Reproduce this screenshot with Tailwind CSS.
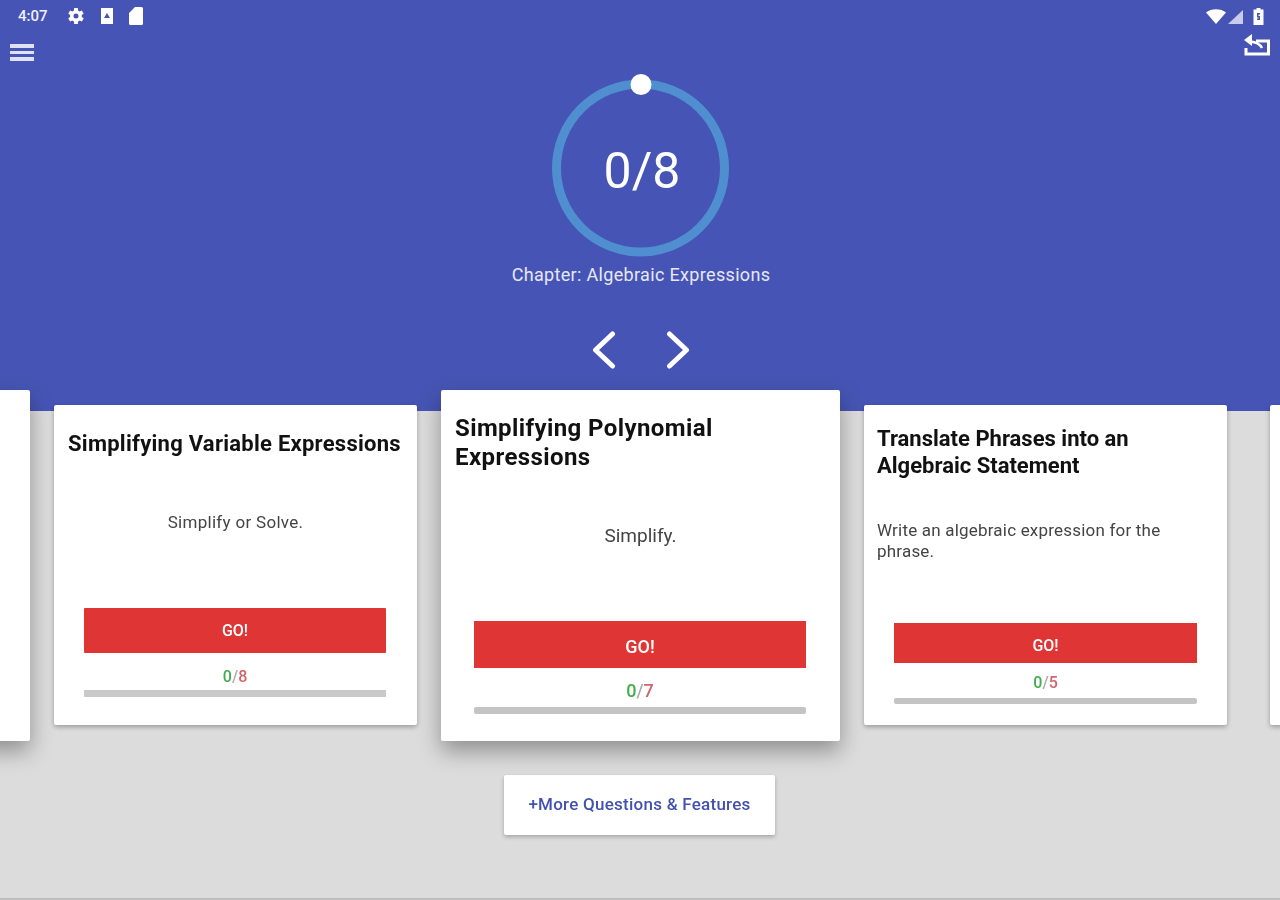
<!DOCTYPE html>
<html lang="en">
<head>
    <meta charset="UTF-8">
    <meta name="viewport" content="width=device-width, initial-scale=1.0">
    <title>Algebra Practice</title>
    <script src="https://cdn.jsdelivr.net/npm/@tailwindcss/browser@4"></script>
</head>
<body class="bg-[#dcdcdc] font-['Roboto',sans-serif] overflow-hidden">
<div class="w-[1280px] h-[900px] overflow-hidden border-b-2 border-[#bdbdbd] blur-[0.7px]">

    <!-- Blue header -->
    <div class="bg-[#4655b5] h-[411px] text-white flex flex-col">
        <!-- Status bar -->
        <div class="flex items-center h-[32px] pl-[18px] pr-[16px]">
            <span class="text-[15px] font-medium w-[50px] text-[#eef0fa]">4:07</span>
            <svg class="w-[18px] h-[18px] ml-[-1px]" viewBox="3 2 20 20" fill="#fff"><path d="M19.4 13a7.5 7.5 0 0 0 0-2l2.1-1.6-2-3.5-2.5 1a7.5 7.5 0 0 0-1.7-1L15 3.2h-4l-.4 2.7a7.5 7.5 0 0 0-1.7 1l-2.5-1-2 3.5L6.5 11a7.5 7.5 0 0 0 0 2l-2.1 1.6 2 3.5 2.5-1a7.5 7.5 0 0 0 1.7 1l.4 2.7h4l.4-2.7a7.5 7.5 0 0 0 1.700-1l2.500 1 2-3.500zM13 14.800a2.800 2.800 0 1 1 0-5.600 2.800 2.800 0 0 1 0 5.600z"/></svg>
            <svg class="w-[14px] h-[16px] ml-[15px]" viewBox="0 0 14 16"><path fill="#fff" fill-rule="evenodd" d="M1 0h12v16H1zM7 5 4 10h6z"/></svg>
            <svg class="w-[14px] h-[18px] ml-[15px]" viewBox="0 0 14 18" fill="#fff"><path d="M6 0h6.500A1.500 1.500 0 0 1 14 1.500v15a1.500 1.500 0 0 1-1.500 1.500h-11A1.500 1.500 0 0 1 0 16.500V6z"/></svg>
            <svg class="w-[20px] h-[15px] ml-auto" viewBox="0 0 20 15" fill="#fff"><path d="M0 3.500C5-1 15-1 20 3.500L10 15z"/></svg>
            <svg class="w-[15px] h-[14px] ml-[2px] mt-[1px]" viewBox="0 0 15 14"><path fill="#fff" fill-opacity=".7" d="M15 0v14H0z"/></svg>
            <svg class="w-[11px] h-[17px] ml-[10px]" viewBox="0 0 11 17"><path fill="#fff" d="M3.500 0h4v1.500h3V17H.5V1.500h3z"/><path fill="#4655b5" d="M4 5h3v1.500H5.500v1.500H7v4H4v-1.500h1.500V9.500H4z"/></svg>
        </div>
        <!-- Toolbar -->
        <div class="flex items-start justify-between h-[30px] pl-[10px] pr-[10px]">
            <div class="flex flex-col gap-[3px] mt-[12px] w-[24px]">
                <span class="h-[3.500px] bg-[#dfe2f4]"></span>
                <span class="h-[3.500px] bg-[#dfe2f4]"></span>
                <span class="h-[3.500px] bg-[#dfe2f4]"></span>
            </div>
            <svg class="w-[27px] h-[23px] mt-[1px]" viewBox="0 0 27 23" fill="none" stroke="#fff" stroke-width="3"><path d="M13 8H25.500V21H3V15"/><path d="M19 15C17 11 13 9 7 8.500" stroke-width="2.500"/><path fill="#fff" stroke="none" d="M9 1 1 7l8 6z"/></svg>
        </div>

        <!-- Progress ring -->
        <div class="relative w-[190px] h-[190px] mx-auto mt-[11px] translate-x-[0.5px]">
            <svg class="w-full h-full" viewBox="0 0 190 190" fill="none"><circle cx="95" cy="95" r="84" stroke="#4f8fcf" stroke-width="9"/></svg>
            <span class="absolute left-1/2 top-[0.5px] w-[21px] h-[21px] -ml-[10.500px] rounded-full bg-white"></span>
            <span class="absolute inset-0 flex items-center justify-center font-normal text-[50px] pt-[6px] pl-[3px]">0/8</span>
        </div>
        <p class="text-center text-[18px] leading-[24px] tracking-[0.33px] text-[#e6e8f6] translate-x-[1px]">Chapter: Algebraic Expressions</p>

        <!-- Prev / next -->
        <div class="flex justify-center gap-[51px] mt-[44px] translate-x-[0.5px]">
            <svg class="w-[24px] h-[38px]" viewBox="0 0 24 38" fill="none" stroke="#fff" stroke-width="5" stroke-linecap="round" stroke-linejoin="round"><path d="M21 3 4 19l17 16"/></svg>
            <svg class="w-[24px] h-[38px]" viewBox="0 0 24 38" fill="none" stroke="#fff" stroke-width="5" stroke-linecap="round" stroke-linejoin="round"><path d="M3 3l17 16L3 35"/></svg>
        </div>
    </div>

    <!-- Card carousel -->
    <div class="flex items-start gap-[24px] ml-[-370px] -mt-[21px] w-[2000px]">
        <div class="w-[400px] h-[351px] shrink-0 bg-white rounded-[2px] shadow-[0_10px_22px_rgba(0,0,0,0.35)]"></div>

        <div class="w-[363px] h-[320px] shrink-0 mt-[15px] bg-white rounded-[2px] shadow-[0_2px_5px_rgba(0,0,0,0.3)] px-[14px] pt-[25px]">
            <h3 class="text-[22px] leading-[28px] font-bold tracking-[0.26px] text-[#111] whitespace-nowrap">Simplifying Variable Expressions</h3>
            <p class="text-[17px] leading-[21px] tracking-[0.3px] text-[#444] text-center mt-[54px]">Simplify or Solve.</p>
            <div class="ml-[16px] mr-[17px]">
                <div class="h-[45px] mt-[75px] bg-[#e03535] text-white text-[16px] font-medium flex items-center justify-center rounded-[1px]">GO!</div>
                <p class="text-[16px] leading-[20px] font-medium text-center mt-[14px] text-[#aaa]"><span class="text-[#43ad4f]">0</span>/<span class="text-[#d4646c]">8</span></p>
                <div class="h-[7px] mt-[3px] bg-[#c9c9c9]"></div>
            </div>
        </div>

        <div class="w-[399px] h-[351px] shrink-0 bg-white rounded-[2px] shadow-[0_10px_22px_rgba(0,0,0,0.35)] px-[14px] pt-[24px]">
            <h3 class="text-[24px] leading-[29px] font-bold tracking-[0.4px] text-[#111]">Simplifying Polynomial Expressions</h3>
            <p class="text-[19px] leading-[22px] text-[#444] text-center mt-[53px]">Simplify.</p>
            <div class="ml-[19px] mr-[20px]">
                <div class="h-[47px] mt-[74px] pt-[4px] bg-[#e03535] text-white text-[18px] font-medium flex items-center justify-center">GO!</div>
                <p class="text-[18px] leading-[20px] font-medium text-center mt-[13px] text-[#aaa]"><span class="text-[#43ad4f]">0</span>/<span class="text-[#d4646c]">7</span></p>
                <div class="h-[7px] mt-[6px] bg-[#c4c4c4] rounded-[2px]"></div>
            </div>
        </div>

        <div class="w-[363px] h-[320px] shrink-0 mt-[15px] bg-white rounded-[2px] shadow-[0_2px_5px_rgba(0,0,0,0.3)] px-[13px] pt-[20px]">
            <h3 class="text-[22px] leading-[27px] font-bold text-[#111]">Translate Phrases into an Algebraic Statement</h3>
            <p class="text-[17px] leading-[21px] tracking-[0.2px] text-[#444] mt-[41px] pr-[40px]">Write an algebraic expression for the phrase.</p>
            <div class="mx-[17px]">
                <div class="h-[40px] mt-[61px] pt-[6px] bg-[#e03535] text-white text-[16px] font-medium flex items-center justify-center">GO!</div>
                <p class="text-[16px] leading-[20px] font-medium text-center mt-[10px] text-[#aaa]"><span class="text-[#43ad4f]">0</span>/<span class="text-[#d4646c]">5</span></p>
                <div class="h-[6px] mt-[5px] bg-[#c4c4c4] rounded-[2px]"></div>
            </div>
        </div>

        <div class="w-[363px] h-[320px] shrink-0 mt-[15px] bg-white rounded-[2px] shadow-[0_2px_5px_rgba(0,0,0,0.3)] ml-[19px]"></div>
    </div>

    <!-- More button -->
    <div class="w-[271px] h-[60px] ml-[504px] mt-[34px] bg-white rounded-[2px] shadow-[0_2px_4px_rgba(0,0,0,0.25)] flex items-center justify-center text-[17px] font-medium tracking-[0.25px] text-[#4252b0]">+More Questions &amp; Features</div>
</div>
</body>
</html>
